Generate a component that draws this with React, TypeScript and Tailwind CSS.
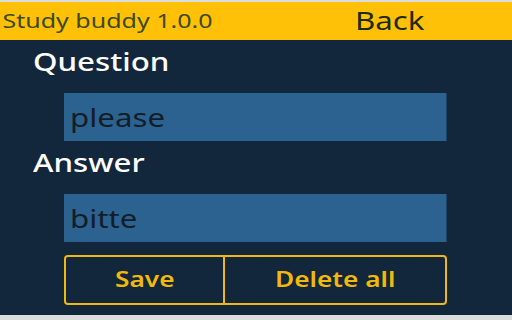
import React, { useState } from 'react';

const font = { fontFamily: '"Noto Sans", "Open Sans", sans-serif' };

export default function App() {
  const [question, setQuestion] = useState('please');
  const [answer, setAnswer] = useState('bitte');

  // the original UI is drawn slightly wide, so text gets a horizontal stretch
  return (
    <div className="w-[512px] h-[320px] bg-[#dcdcdc] pt-[2px] pb-[5px] overflow-hidden" style={font}>
      <div className="h-full flex flex-col bg-[#12263c]">
        <header className="h-[38px] bg-[#ffc107] flex items-center">
          <span className="pl-[2px] inline-block origin-left scale-x-125 text-[20px] text-[#3c4a1c]">Study buddy 1.0.0</span>
          <button className="ml-auto mr-[101px] inline-block origin-left scale-x-125 text-[25px] text-[#1e2a10]">Back</button>
        </header>

        <div className="flex flex-col items-start px-[33px]">
          <label className="mt-[6px] inline-block origin-left scale-x-125 text-[25px] font-medium text-white leading-[30px]">Question</label>
          <input
            value={question}
            onChange={(e) => setQuestion(e.target.value)}
            className="mt-[17px] ml-[31px] w-[306.4px] h-[48px] origin-left scale-x-125 bg-[#2c6290] px-[4.8px] text-[25px] text-[#111e2a] outline-none"
          />
          <label className="mt-[6px] inline-block origin-left scale-x-125 text-[25px] font-medium text-white leading-[30px]">Answer</label>
          <input
            value={answer}
            onChange={(e) => setAnswer(e.target.value)}
            className="mt-[17px] ml-[31px] w-[306.4px] h-[48px] origin-left scale-x-125 bg-[#2c6290] px-[4.8px] text-[25px] text-[#111e2a] outline-none"
          />
          <div className="mt-[13px] ml-[31px] w-[383px] h-[50px] flex border-2 border-[#f0b90b] rounded-[4px]">
            <button className="w-[159px] border-r-2 border-[#f0b90b] flex items-center justify-center">
              <span className="inline-block scale-x-125 text-[21px] font-semibold text-[#f0b90b]">Save</span>
            </button>
            <button className="flex-1 flex items-center justify-center">
              <span className="inline-block scale-x-125 text-[21px] font-semibold text-[#f0b90b]">Delete all</span>
            </button>
          </div>
        </div>
      </div>
    </div>
  );
}
